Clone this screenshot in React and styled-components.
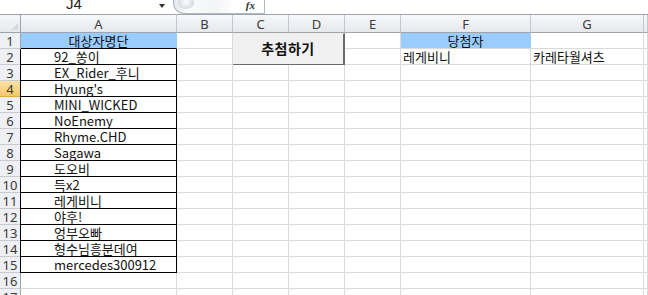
import React from "react";
import styled, { createGlobalStyle } from "styled-components";

const GlobalStyle = createGlobalStyle`
  html, body {
    margin: 0;
    padding: 0;
    background: #ffffff;
    overflow: hidden;
  }
  body {
    font-family: "Noto Sans CJK KR", "Noto Sans", sans-serif;
  }
`;

const Window = styled.div`
  width: 648px;
  height: 295px;
  overflow: hidden;
  background: #ffffff;
`;

// Formula bar (cut off at the top of the screenshot)
const FormulaBar = styled.div`
  display: flex;
  height: 15px;
  box-sizing: border-box;
  border-bottom: 1px solid #9ea4ab;
  overflow: hidden;
`;

const NameBox = styled.div`
  width: 173px;
  display: flex;
  padding-left: 66px;
  box-sizing: border-box;
  font-size: 15px;
  line-height: 15px;
  color: #222;
  font-family: "Liberation Sans", sans-serif;
  span {
    margin-top: -4px;
  }
`;

const DropArrow = styled.div`
  margin-left: auto;
  margin-right: 8px;
  margin-top: 4px;
  width: 0;
  height: 0;
  border-left: 3px solid transparent;
  border-right: 3px solid transparent;
  border-top: 4px solid #333;
`;

const Expander = styled.div`
  width: 92px;
  display: flex;
  align-items: center;
  justify-content: flex-end;
  box-sizing: border-box;
  padding-right: 9px;
  border: 1px solid #b2b8c0;
  border-top: none;
  border-bottom-left-radius: 11px;
  background: linear-gradient(90deg, #e4e7eb 0px, #fafbfc 14px, #f3f4f6 40px, #ffffff 60px);
  position: relative;
  &::before {
    content: "";
    position: absolute;
    left: 4px;
    top: -3px;
    width: 16px;
    height: 12px;
    border-radius: 50%;
    background: radial-gradient(circle at 50% 40%, #ffffff 0%, #d7dbe1 70%, #c5cad2 100%);
  }
`;

const Fx = styled.span`
  font-family: "Liberation Serif", serif;
  font-style: italic;
  font-weight: bold;
  font-size: 11px;
  line-height: 11px;
  color: #333;
  margin-top: -2px;
`;

const FormulaInput = styled.div`
  flex: 1;
  background: #ffffff;
`;

// Sheet grid
const Sheet = styled.div`
  display: grid;
  grid-template-columns: 21px 156px 56px 56px 56px 56px 130px 113px 1fr;
  grid-template-rows: 18px repeat(17, 16px);
`;

const Corner = styled.div`
  background: linear-gradient(#f6f7f9, #e6e9ed);
  border-right: 1px solid #9ea4ab;
  border-bottom: 1px solid #9ea4ab;
  box-sizing: border-box;
  position: relative;
  &::after {
    content: "";
    position: absolute;
    right: 2px;
    bottom: 2px;
    width: 0;
    height: 0;
    border-left: 7px solid transparent;
    border-bottom: 7px solid #d6d9dd;
  }
`;

const ColHeader = styled.div`
  background: linear-gradient(#f7f8fa, #e5e8ec);
  border-right: 1px solid #c3c8ce;
  border-bottom: 1px solid #9ea4ab;
  box-sizing: border-box;
  display: flex;
  align-items: center;
  justify-content: center;
  font-family: "Noto Sans", sans-serif;
  font-size: 13px;
  color: #3c3c3c;
  line-height: 14px;
`;

const RowHeader = styled.div`
  background: ${({ active }) =>
    active ? "linear-gradient(#fbe3a4, #f5c66e)" : "#eef0f3"};
  border-right: 1px solid #9ea4ab;
  border-bottom: 1px solid ${({ active }) => (active ? "#e0a84a" : "#c8ccd2")};
  box-sizing: border-box;
  display: flex;
  align-items: center;
  justify-content: center;
  font-family: "Noto Sans", sans-serif;
  font-size: 13px;
  color: #3a3a3a;
  line-height: 14px;
`;

const Cell = styled.div`
  box-sizing: border-box;
  border-right: 1px solid #dadada;
  border-bottom: 1px solid #dadada;
  background: ${({ fill }) => fill || "#ffffff"};
  display: flex;
  align-items: center;
  justify-content: ${({ center }) => (center ? "center" : "flex-start")};
  padding-left: ${({ indent }) => (indent ? `${indent}px` : "0")};
  font-size: 13px;
  color: #111;
  white-space: nowrap;
  line-height: 14px;
`;

const ListCell = styled(Cell)`
  margin-left: -1px;
  border-left: 1px solid #000;
  border-right: 1px solid #000;
  border-bottom: 1px solid #000;
  padding-left: 33px;
`;

const TitleCell = styled(Cell)`
  border-bottom: 1px solid ${({ edge }) => edge || "#dadada"};
  border-right: 1px solid ${({ fill }) => fill || "#dadada"};
`;

const DrawButton = styled.div`
  grid-column: 4 / 6;
  grid-row: 2 / 4;
  margin-left: -1px;
  margin-bottom: -1px;
  background: #f0f0f0;
  border-top: 1px solid #f0f0f0;
  border-left: 1px solid #e2e2e2;
  border-right: 2px solid #6b6b6b;
  border-bottom: 2px solid #6b6b6b;
  box-sizing: border-box;
  display: flex;
  align-items: center;
  justify-content: center;
  font-size: 14px;
  line-height: 16px;
  font-weight: bold;
  color: #111;
  letter-spacing: 0.5px;
  padding-bottom: 3px;
`;

const columns = ["A", "B", "C", "D", "E", "F", "G", ""];

const names = [
  "92_쏭이",
  "EX_Rider_후니",
  "Hyung's",
  "MINI_WICKED",
  "NoEnemy",
  "Rhyme.CHD",
  "Sagawa",
  "도오비",
  "득x2",
  "레게비니",
  "야후!",
  "엉부오빠",
  "형수님흥분데여",
  "mercedes300912",
];

const blue = "#99ccff";

export default function App() {
  const rows = [];
  for (let r = 1; r <= 17; r++) {
    const cells = [];
    cells.push(
      <RowHeader key={`h${r}`} active={r === 4}>
        {r}
      </RowHeader>
    );

    // column A
    if (r === 1) {
      cells.push(
        <TitleCell key="a" fill={blue} edge="#000" center>
          대상자명단
        </TitleCell>
      );
    } else if (r <= 15) {
      cells.push(<ListCell key="a">{names[r - 2]}</ListCell>);
    } else {
      cells.push(<Cell key="a" />);
    }

    // column B
    cells.push(<Cell key="b" />);

    // C, D are covered by the button on rows 1-2
    if (r > 2) {
      cells.push(<Cell key="c" />);
      cells.push(<Cell key="d" />);
    }

    // column E
    cells.push(<Cell key="e" />);

    // column F
    if (r === 1) {
      cells.push(
        <TitleCell key="f" fill={blue} center>
          당첨자
        </TitleCell>
      );
    } else if (r === 2) {
      cells.push(
        <Cell key="f" indent={2}>
          레게비니
        </Cell>
      );
    } else {
      cells.push(<Cell key="f" />);
    }

    // column G
    if (r === 2) {
      cells.push(
        <Cell key="g" indent={2}>
          카레타월셔츠
        </Cell>
      );
    } else {
      cells.push(<Cell key="g" />);
    }

    // column H (cut off)
    cells.push(<Cell key="h" />);

    rows.push(<React.Fragment key={r}>{cells}</React.Fragment>);
  }

  return (
    <Window>
      <GlobalStyle />
      <FormulaBar>
        <NameBox>
          <span>J4</span>
          <DropArrow />
        </NameBox>
        <Expander>
          <Fx>fx</Fx>
        </Expander>
        <FormulaInput />
      </FormulaBar>
      <Sheet>
        <Corner />
        {columns.map((c, i) => (
          <ColHeader key={i}>{c}</ColHeader>
        ))}
        <DrawButton>추첨하기</DrawButton>
        {rows}
      </Sheet>
    </Window>
  );
}
